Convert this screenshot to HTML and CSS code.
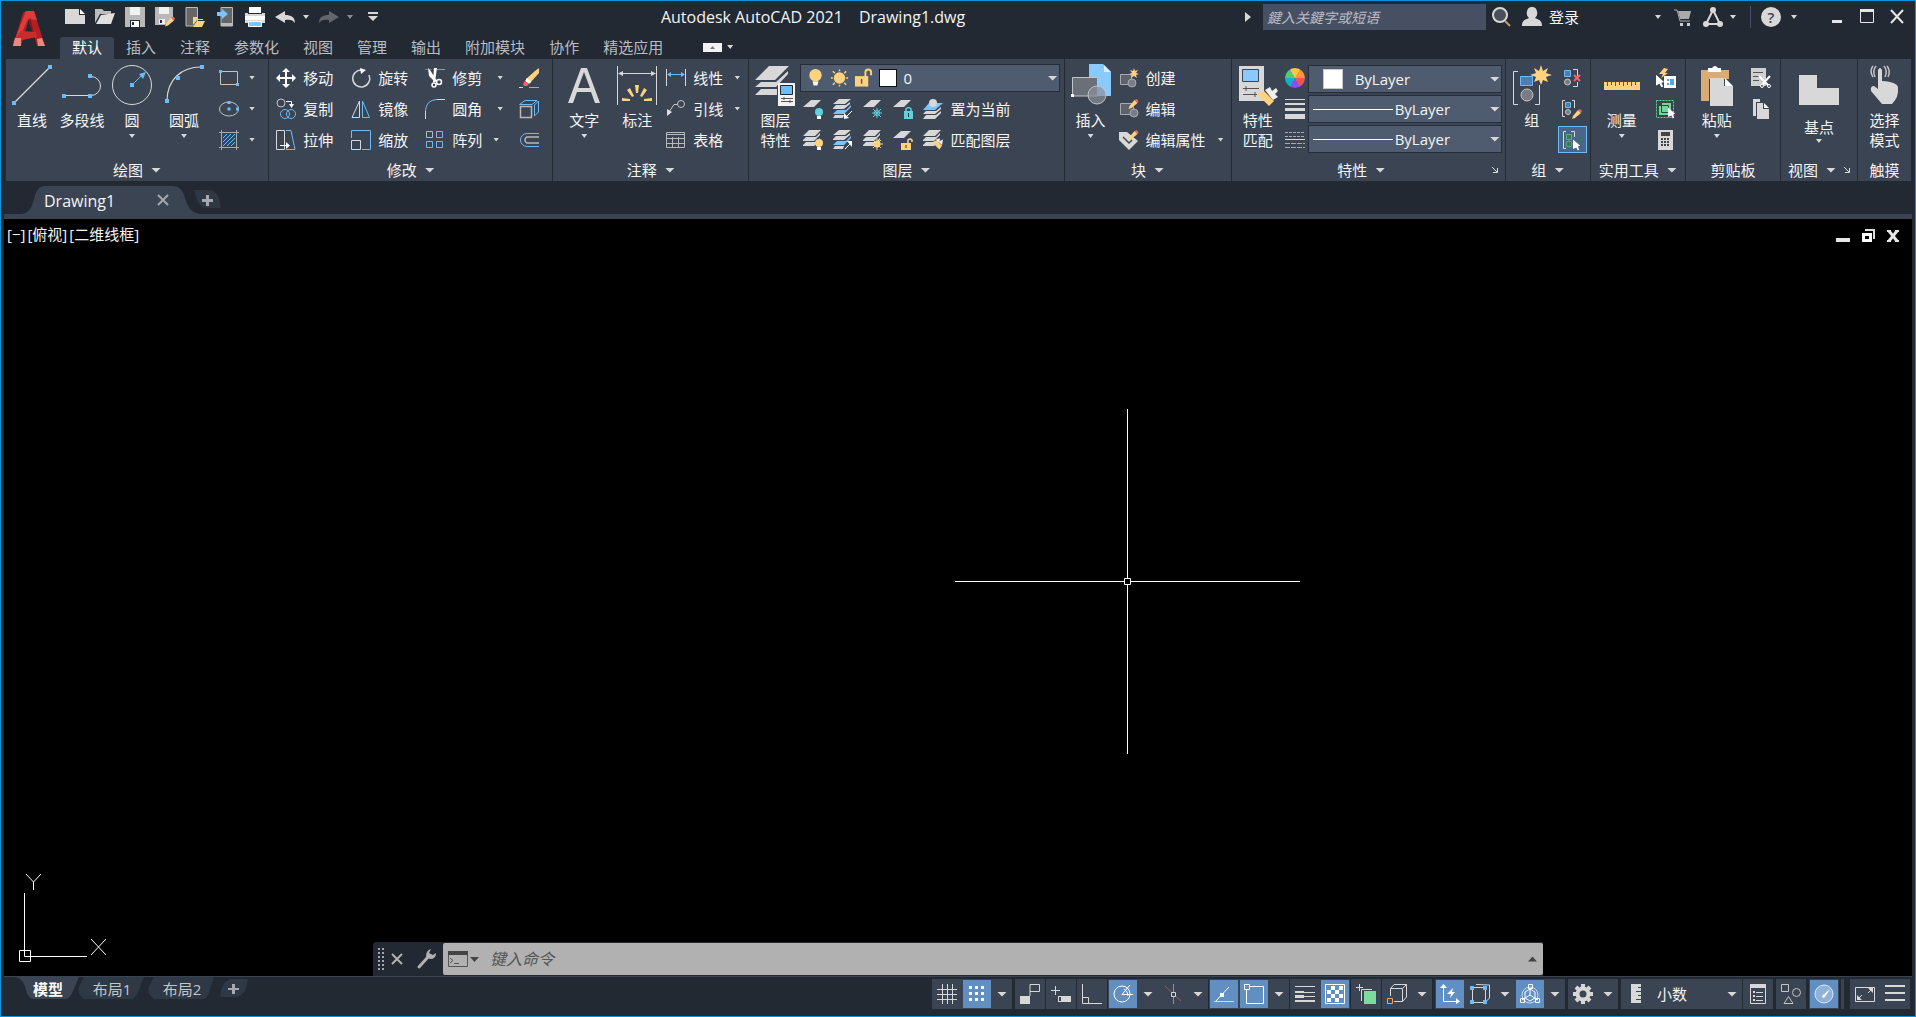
FILE: index.html
```html
<!DOCTYPE html>
<html lang="zh-CN">
<head>
<meta charset="utf-8">
<title>Autodesk AutoCAD 2021 - Drawing1.dwg</title>
<link rel="stylesheet" href="styles.css">
</head>
<body>
<svg class="defs" aria-hidden="true">
  <symbol id="leaf" viewBox="0 0 20 20"><path fill="#d8d8d8" d="M8 1H18L11 8H0z"/></symbol>
  <symbol id="stack" viewBox="0 0 20 20"><path fill="#d8d8d8" d="M6 0H18L12 6H0zM0 10L3 7H13L17 3V5L11 11H0zM0 15L3 12H13L17 8V10L11 16H0z"/></symbol>
  <symbol id="stackblue" viewBox="0 0 20 20"><path fill="#d8d8d8" d="M6 0H18L12 5H0zM0 9L3 6H13L17 3V5L11 10H0z"/><path fill="#7cc4fb" d="M0 15L4 11H13L18 6V8L11 15z"/><path fill="#d8d8d8" d="M0 19L2 16H11L10 19z"/></symbol>
  <symbol id="pencil" viewBox="0 0 10 10"><path fill="#ffd27f" d="M1 7L6 1 9 4 3 9 0 10z"/><path fill="#f4636a" d="M6 1L8 0 10 2 9 4z"/></symbol>
  <symbol id="brush" viewBox="0 0 12 12"><path fill="#ffd27f" d="M0 4L5 2 11 8 8 12z"/><path fill="#f0f0f0" d="M4 1L8 0 8 3 12 1 11 7z"/></symbol>
  <symbol id="cursor" viewBox="0 0 10 14"><path fill="#fff" d="M0 0L9 8 6 9 8 13 6 14 4 10 0 12z"/></symbol>
</svg>
<div class="window">
  <header class="top">
    <button class="logo" aria-label="应用程序菜单"><svg width="32" height="36" viewBox="0 0 32 36"><path fill="#b51f24" d="M10 2L13 0H21L32 35H24L16 8 8 35H0z"/><path fill="#e03a3c" d="M13 0H21L24 9 15 8 6 28 0 33z"/><path fill="#8d1519" d="M17 6L24 35 21 24 16 12z"/><path fill="#c92b2f" d="M8 20L23 21 24 26 0 31z"/><path fill="#e98a82" d="M2 27L8 27 8 35H0zM24 28L29 27 32 35H25z"/></svg></button>
    <div class="topmain">
      <div class="titlebar">
        <div class="qat">
          <button class="ic" aria-label="新建"><svg viewBox="0 0 20 20"><path fill="#d8d8d8" d="M0 2H14V8H20V17H0z"/><path fill="#fff" d="M15 2L20 7H15z"/></svg></button>
          <button class="ic" aria-label="打开"><svg viewBox="0 0 20 20"><path fill="#bcbcbc" d="M0 2H7L9 4H16V7H5L0 16z"/><path fill="#e0e0e0" d="M6 8L20 6 16 17H1z"/></svg></button>
          <button class="ic" aria-label="保存"><svg viewBox="0 0 20 20"><path fill="#b8b8b8" d="M0 0H20V20H0z"/><path fill="#f2f2f2" d="M5 0H15V8H5z"/><path fill="#232a34" d="M5 13H15V20H5z"/><path fill="#fff" d="M6 14H14V20H6z"/><path fill="#232a34" d="M7 15H9V18H7z"/></svg></button>
          <button class="ic" aria-label="另存为"><svg viewBox="0 0 20 20"><path fill="#b8b8b8" d="M0 0H18V10L10 18H0z"/><path fill="#f2f2f2" d="M4 0H14V7H4zM4 12H10V17H4z"/><path fill="#232a34" d="M5 13H7V16H5z"/><use href="#pencil" x="10" y="9" width="10" height="11"/></svg></button>
          <button class="ic" aria-label="从移动设备打开"><svg viewBox="0 0 20 20"><path fill="#666" stroke="#bbb" d="M1 .5H12.500V19H1z"/><path fill="#ffd27f" d="M8 10H12L13 12H18V13H12L8 18zM12 14H20L17 20H8z"/></svg></button>
          <button class="ic" aria-label="保存到移动设备"><svg viewBox="0 0 20 20"><path fill="#666" stroke="#bbb" d="M6 .5H17.500V19H6z"/><path fill="#bbb" d="M6 16H17V19H6z"/><path fill="#7cc4fb" d="M2 5H7V2L13 7 7 12V9H2z"/></svg></button>
          <button class="ic" aria-label="打印"><svg viewBox="0 0 20 20"><path fill="#d8d8d8" d="M4 0H16V6H20V16H0V6H4z"/><path fill="#fff" d="M4 0H16V6H4zM0 9H20V13H0z"/><path fill="#232a34" d="M3 6H17V7H3z"/><path fill="#7cc4fb" stroke="#fff" d="M3.500 14.500H16.500V19.500H3.500z"/></svg></button>
          <button class="ic" aria-label="放弃"><svg viewBox="0 0 20 20"><path fill="#d8d8d8" d="M0 10L10 4V8C16 8 20 10 20 16 18 13 15 12 10 13V16z"/></svg></button>
          <button class="mini" aria-label="放弃列表"><i class="caret"></i></button>
          <button class="ic" aria-label="重做"><svg viewBox="0 0 20 20"><path fill="#63676d" d="M20 10L10 4V8C4 8 0 10 0 16 2 13 5 12 10 13V16z"/></svg></button>
          <button class="mini dim" aria-label="重做列表"><i class="caret"></i></button>
          <button class="ic" aria-label="自定义快速访问工具栏"><svg viewBox="0 0 20 20"><path fill="#d8d8d8" d="M5 5H15V7H5zM5 9H15L10 14z"/></svg></button>
        </div>
        <h1 class="title"><span>Autodesk AutoCAD 2021</span><span>Drawing1.dwg</span></h1>
        <div class="info">
          <button class="mini" aria-label="收拢"><svg width="6" height="10" viewBox="0 0 6 10"><path fill="#d8d8d8" d="M0 0L6 5 0 10z"/></svg></button>
          <input class="search" type="text" aria-label="搜索" placeholder="鍵入关鍵字或短语">
          <button class="ic" aria-label="搜索"><svg viewBox="0 0 20 20"><circle cx="8" cy="8" r="7" fill="#4a505a" stroke="#d8d8d8" stroke-width="2"/><path stroke="#c99a63" stroke-width="2" d="M13 14L18 19"/></svg></button>
          <button class="login"><svg width="20" height="20" viewBox="0 0 20 20"><path fill="#d8d8d8" d="M10 0A5 6 0 0 1 13 11C18 13 20 14 20 19H0C0 14 2 13 7 11A5 6 0 0 1 10 0"/></svg><span>登录</span><i class="caret"></i></button>
          <button class="ic" aria-label="应用商店"><svg viewBox="0 0 20 20"><path fill="none" stroke="#aaa" d="M1 3H4L7 14H17"/><path fill="#aaa" d="M5 4H18L16 12H7z"/><path fill="#ccc" d="M7 16H10V19H7zM14 16H17V19H14z"/></svg></button>
          <button class="app" aria-label="Autodesk"><svg width="20" height="20" viewBox="0 0 20 20"><path fill="none" stroke="#d8d8d8" stroke-width="2" d="M10 3L17 17H3z"/><circle cx="10" cy="3" r="3" fill="#d8d8d8"/><circle cx="3" cy="17" r="3" fill="#d8d8d8"/><circle cx="17" cy="17" r="3" fill="#d8d8d8"/></svg><i class="caret"></i></button>
          <span class="sep"></span>
          <button class="ic help" aria-label="帮助">?</button>
          <i class="caret"></i>
          <div class="wins">
            <button class="ic" aria-label="最小化"><svg viewBox="0 0 20 20"><path fill="#e6e6e6" d="M5 13H15V16H5z"/></svg></button>
            <button class="ic" aria-label="最大化"><svg viewBox="0 0 20 20"><path fill="none" stroke="#e6e6e6" d="M3 3.500H17M3.500 3V15.500H16.500V3"/><path fill="#e6e6e6" d="M3 2H17V5H3z"/></svg></button>
            <button class="ic" aria-label="关闭"><svg viewBox="0 0 20 20"><path stroke="#e6e6e6" stroke-width="2" d="M4 3L16 16M16 3L4 16"/></svg></button>
          </div>
        </div>
      </div>
      <nav class="tabs">
        <button class="on">默认</button><button>插入</button><button>注释</button><button>参数化</button><button>视图</button><button>管理</button><button>输出</button><button>附加模块</button><button>协作</button><button>精选应用</button>
        <button class="fold" aria-label="最小化功能区"><svg width="19" height="9" viewBox="0 0 19 9"><path fill="#f2f2f2" d="M0 0H19V9H0z"/><path fill="#777" d="M7 6H12L9.500 3z"/></svg><i class="caret"></i></button>
      </nav>
    </div>
  </header>

  <main class="ribbon">
    <section class="panel">
      <div class="body">
        <button class="big w48"><svg viewBox="0 0 40 40"><path stroke="#d8d8d8" stroke-width="1.200" d="M1 39L39 1"/><path fill="#6cbcf7" d="M0 36H4V40H0zM36 0H40V4H36z"/></svg>直线</button>
        <button class="big w52"><svg viewBox="0 0 40 40"><path fill="none" stroke="#d8d8d8" d="M4 30.500H26M29 11.500A9.500 9.500 0 0 1 29 30.500"/><path fill="#6cbcf7" d="M0 29H4V33H0zM26 29H30V33H26zM26 9H30V13H26z"/></svg>多段线</button>
        <button class="big w48"><svg viewBox="0 0 40 40"><circle cx="20" cy="20" r="19.500" fill="none" stroke="#d8d8d8"/><path stroke="#6cbcf7" d="M22 18L30 10"/><path fill="#6cbcf7" d="M18 18H22V22H18zM34 7L31 14 27 9z"/></svg>圆<i class="caret"></i></button>
        <button class="big w56"><svg viewBox="0 0 40 40"><path fill="none" stroke="#d8d8d8" stroke-width="1.200" d="M3 36C3 14 18 2 37 2"/><path fill="#6cbcf7" d="M1 34H5V38H1zM36 0H40V4H36zM12 11H16V15H12z"/></svg>圆弧<i class="caret"></i></button>
        <div class="rows">
          <div class="row"><button class="tool" aria-label="矩形"><svg viewBox="0 0 20 20"><path fill="none" stroke="#c4c4c4" d="M1.500 3.500H18.500V16.500H1.500z"/><path fill="#6cbcf7" d="M0 2H3V5H0zM17 15H20V18H17z"/></svg></button><i class="caret"></i></div>
          <div class="row"><button class="tool" aria-label="椭圆"><svg viewBox="0 0 20 20"><ellipse cx="10" cy="10" rx="9.500" ry="7" fill="none" stroke="#c4c4c4"/><path fill="#6cbcf7" d="M8.500 8.500H11.500V11.500H8.500zM17 8.500H20V11.500H17zM8.500 2H11.500V5H8.500z"/></svg></button><i class="caret"></i></div>
          <div class="row"><button class="tool" aria-label="图案填充"><svg viewBox="0 0 20 20"><path stroke="#aaa" d="M0 2.500H20M0 17.500H20M2.500 0V20M17.500 0V20"/><path stroke="#6cbcf7" d="M4 8L8 4M4 12L12 4M4 16L16 4M8 16L16 8M12 16L16 12"/></svg></button><i class="caret"></i></div>
        </div>
      </div>
      <h2>绘图<i class="caret lg"></i></h2>
    </section>

    <section class="panel modify">
      <div class="body">
        <div class="rows">
          <button class="tool"><svg viewBox="0 0 20 20"><path fill="#fff" d="M10 0L14 4H11V9H16V6L20 10 16 14V11H11V16H14L10 20 6 16H9V11H4V14L0 10 4 6V9H9V4H6z"/></svg>移动</button>
          <button class="tool"><svg viewBox="0 0 20 20"><circle cx="5" cy="4" r="4" fill="none" stroke="#c4c4c4"/><circle cx="9" cy="15" r="4.500" fill="none" stroke="#6cbcf7"/><circle cx="15" cy="15" r="4.500" fill="none" stroke="#6cbcf7"/><path fill="none" stroke="#fff" d="M10 2.500H15.500V6"/><path fill="#fff" d="M13 5H18L15.500 9z"/></svg>复制</button>
          <button class="tool"><svg viewBox="0 0 20 20"><path fill="none" stroke="#d8d8d8" d="M.5 .5H8.500V19.500H.5z"/><path fill="none" stroke="#6cbcf7" d="M10 .5H15L19 19.500H10"/><path stroke="#fff" d="M4 15.500H12"/><path fill="#fff" d="M10 12L14 15.500 10 19z"/></svg>拉伸</button>
        </div>
        <div class="rows">
          <button class="tool"><svg viewBox="0 0 20 20"><path fill="none" stroke="#d8d8d8" stroke-width="1.500" d="M11 2A8.500 8.500 0 1 0 18 7"/><path fill="#fff" d="M9 0L15 2 10 6z"/></svg>旋转</button>
          <button class="tool"><svg viewBox="0 0 20 20"><path fill="none" stroke="#d8d8d8" d="M8.500 2V18.500H1z"/><path fill="none" stroke="#6cbcf7" d="M11.500 2V18.500H18.500z"/></svg>镜像</button>
          <button class="tool"><svg viewBox="0 0 20 20"><path fill="none" stroke="#6cbcf7" d="M.5 8V.5H19.500V19.500H11"/><path fill="none" stroke="#d8d8d8" d="M.5 10.500H9.500V19.500H.5z"/></svg>缩放</button>
        </div>
        <div class="rows wide">
          <div class="row"><button class="tool"><svg viewBox="0 0 20 20"><path stroke="#4e7ea6" stroke-dasharray="3 1" d="M0 1.500H9"/><path stroke="#999" d="M12 1.500H20"/><path fill="#fff" d="M3 0L5 2 12 13 10 14 4 8zM9 0H12L10 14 8 14z"/><circle cx="9" cy="17" r="2" fill="none" stroke="#fff" stroke-width="1.500"/><circle cx="14" cy="14" r="2.500" fill="none" stroke="#fff" stroke-width="1.500"/></svg>修剪</button><i class="caret"></i></div>
          <div class="row"><button class="tool"><svg viewBox="0 0 20 20"><path fill="none" stroke="#6cbcf7" d="M.5 12Q1 1 12 .5"/><path stroke="#d8d8d8" d="M12 .5H20M.5 12V20"/></svg>圆角</button><i class="caret"></i></div>
          <div class="row near"><button class="tool"><svg viewBox="0 0 20 20"><path fill="none" stroke="#b9b9b9" d="M1.500 1.500H7.500V7.500H1.500z"/><path fill="none" stroke="#6cbcf7" d="M11.500 1.500H17.500V7.500H11.500zM1.500 11.500H7.500V17.500H1.500zM11.500 11.500H17.500V17.500H11.500z"/></svg>阵列</button><i class="caret"></i></div>
        </div>
        <div class="rows">
          <button class="tool" aria-label="删除"><svg viewBox="0 0 20 20"><path stroke="#d8d8d8" d="M0 19.500H4"/><path stroke="#6cbcf7" d="M10 19.500H20"/><path fill="#ffd27f" d="M20 0V5L11 15 7 11 16 3z"/><path fill="#fff" d="M8 10L12 14 10 16 6 13z"/><path fill="#f4636a" d="M6 13L10 16 8 18H5L4 16z"/></svg></button>
          <button class="tool" aria-label="分解"><svg viewBox="0 0 20 20"><path fill="none" stroke="#b9b9b9" stroke-width="1.500" d="M1.500 7.500H12.500V18.500H1.500z"/><path fill="none" stroke="#6cbcf7" d="M.5 5.500L6 1.500H18L13 5.500zM15.500 17V6L19.500 2V13z"/></svg></button>
          <button class="tool" aria-label="偏移"><svg viewBox="0 0 20 20"><path fill="none" stroke="#6cbcf7" d="M20 3.500H8A6.500 6.500 0 0 0 8 16.500H20"/><path fill="none" stroke="#b9b9b9" stroke-width="1.500" d="M20 7H8A3.200 3.200 0 0 0 8 13H20"/></svg></button>
        </div>
      </div>
      <h2>修改<i class="caret lg"></i></h2>
    </section>

    <section class="panel annot">
      <div class="body">
        <button class="big w48"><svg viewBox="0 0 40 40"><path fill="#d8d8d8" fill-rule="evenodd" d="M17 3H23L36 38H31L27 27H13L9 38H4zM20 7L14 23H26z"/></svg>文字<i class="caret"></i></button>
        <button class="big w52"><svg viewBox="0 0 40 40"><path stroke="#d8d8d8" d="M.5 1V40M39.500 1V40M3 8.500H37"/><path fill="#d8d8d8" d="M1 8.500L6 6V11zM39 8.500L34 6V11z"/><path fill="#ffd27f" d="M18 20H22L21 28H19zM10 25L13 23 17 31 15 32zM30 25L27 23 23 31 25 32zM5 33L13 34V36H5zM35 33L27 34V36H35z"/></svg>标注</button>
        <div class="rows wide">
          <div class="row"><button class="tool"><svg viewBox="0 0 20 20"><path stroke="#d8d8d8" d="M.5 1V18M19.500 1V18"/><path stroke="#6cbcf7" d="M3 6.500H17"/><path fill="#6cbcf7" d="M1 6.500L5 4V9zM19 6.500L15 4V9z"/></svg>线性</button><i class="caret"></i></div>
          <div class="row"><button class="tool"><svg viewBox="0 0 20 20"><circle cx="15" cy="5" r="3.500" fill="none" stroke="#c4c4c4"/><path fill="none" stroke="#c4c4c4" d="M11 5.500H8L3 13"/><path fill="#e0e0e0" d="M1 10L6 13 1 17z"/></svg>引线</button><i class="caret"></i></div>
          <div class="row"><button class="tool"><svg viewBox="0 0 20 20"><path fill="none" stroke="#b9b9b9" d="M.5 2.500H18.500V17.500H.5zM0 4.500H19M0 8.500H19M0 13.500H19M6.500 7V18M12.500 7V18"/></svg>表格</button></div>
        </div>
      </div>
      <h2>注释<i class="caret lg"></i></h2>
    </section>

    <section class="panel layer">
      <div class="body">
        <button class="big w48"><svg viewBox="0 0 40 40"><path fill="#d8d8d8" d="M14 1H34L20 15H0zM0 22L6 17H21L33 6V9L21 22zM0 30L6 24H22V30z"/><path fill="#f2f2f2" d="M23 18H40V41H23z"/><path fill="#6cbcf7" stroke="#222933" d="M25.500 20.500H37.500V29.500H25.500z"/><path stroke="#555" d="M26 33.500H38M26 36.500H38M29 32V35M35 35V38"/></svg>图层<br>特性</button>
        <div class="fill">
          <label class="combo"><svg class="s20" viewBox="0 0 20 20"><circle cx="10" cy="7" r="6.500" fill="#ffd27f"/><path fill="#ffd27f" d="M7 11H13V14H7z"/><path fill="#fff" d="M7 14H13L12 18H8z"/></svg><svg class="s20" viewBox="0 0 20 20"><circle cx="10" cy="10" r="6" fill="#ffd27f"/><path stroke="#ffd27f" stroke-width="1.500" d="M10 1V3M10 17V19M1 10H3M17 10H19M3 3L5 5M15 15L17 17M3 17L5 15M15 5L17 3"/></svg><svg class="s20" viewBox="0 0 20 20"><path fill="#ffd27f" d="M1 8H15V19H1z"/><path fill="none" stroke="#ffd27f" stroke-width="2" d="M12 9V4Q12 1 15 1T18 4V7"/><path stroke="#555" stroke-width="1.500" d="M8 11V16"/></svg><span class="swatch dark"></span><select aria-label="图层"><option>0</option></select><i class="caret lg"></i></label>
          <div class="strips">
          <div class="strip">
            <button class="tool" aria-label="关"><svg viewBox="0 0 20 20"><use href="#leaf"/><circle cx="16" cy="13" r="4" fill="#5fd2dd"/><path fill="#fff" d="M14 17H18V20H14z"/></svg></button>
            <button class="tool" aria-label="隔离"><svg viewBox="0 0 20 20"><use href="#stackblue"/><path stroke="#fff" d="M19 12L12 19"/><path fill="#fff" d="M11 14L16 19 11 20z"/></svg></button>
            <button class="tool" aria-label="冻结"><svg viewBox="0 0 20 20"><use href="#leaf"/><path stroke="#5fd2dd" d="M14 9V19M9 14H19M10 10L18 18M18 10L10 18"/><circle cx="14" cy="14" r="2.500" fill="none" stroke="#5fd2dd"/></svg></button>
            <button class="tool" aria-label="锁定"><svg viewBox="0 0 20 20"><use href="#leaf"/><path fill="#5fd2dd" d="M11 12H20V20H11z"/><path fill="none" stroke="#5fd2dd" stroke-width="1.500" d="M13 12V10Q15.500 7 18 10V12"/><path stroke="#333" d="M15.500 14V18"/></svg></button>
            <button class="tool"><svg viewBox="0 0 20 20"><path fill="#7cc4fb" d="M6 4H20L12 11H0z"/><circle cx="10" cy="4" r="4" fill="#d8d8d8"/><path fill="#d8d8d8" d="M0 15L3 12H13L18 8V10L12 15zM0 20L3 16H13L18 12V14L12 20z"/></svg>置为当前</button>
          </div>
          <div class="strip">
            <button class="tool" aria-label="打开所有图层"><svg viewBox="0 0 20 20"><use href="#stack"/><circle cx="16" cy="13" r="4" fill="#ffd27f"/><path fill="#fff" d="M14 17H18V20H14z"/></svg></button>
            <button class="tool" aria-label="取消隔离"><svg viewBox="0 0 20 20"><use href="#stackblue"/><path stroke="#fff" d="M12 19L18 13"/><path fill="#fff" d="M14 11L19 11V17z"/></svg></button>
            <button class="tool" aria-label="解冻所有图层"><svg viewBox="0 0 20 20"><use href="#stack"/><circle cx="14" cy="14" r="3.500" fill="#ffd27f"/><path stroke="#ffd27f" d="M14 8V20M8 14H20M10 10L18 18M18 10L10 18"/></svg></button>
            <button class="tool" aria-label="解锁"><svg viewBox="0 0 20 20"><use href="#leaf"/><path fill="#ffd27f" d="M8 13H18V20H8z"/><path fill="none" stroke="#ffd27f" stroke-width="1.500" d="M15 13V10Q17 8 19 10V12"/><path stroke="#333" d="M13 15V18"/></svg></button>
            <button class="tool"><svg viewBox="0 0 20 20"><use href="#stack"/><use href="#brush" x="9" y="8" width="11" height="12"/></svg>匹配图层</button>
          </div>
          </div>
        </div>
      </div>
      <h2>图层<i class="caret lg"></i></h2>
    </section>

    <section class="panel block">
      <div class="body">
        <button class="big w48"><svg viewBox="0 0 40 40"><path fill="#89c9fb" d="M18 -1H32L40 7V31H18z"/><path fill="#d6ebfb" d="M33 0L40 7H33z"/><path fill="#6a6f7a" stroke="#c4c4c4" d="M1.500 12.500H26.500V31H1.500z"/><circle cx="26" cy="30" r="9" fill="#8b909a" fill-opacity=".7" stroke="#c4c4c4"/><path fill="#fff" d="M0 29H3V32H0z"/></svg>插入<i class="caret"></i></button>
        <div class="rows wide">
          <button class="tool"><svg viewBox="0 0 20 20"><path fill="#5c626e" stroke="#aaa" d="M1.500 6.500H12.500V16.500H1.500z"/><circle cx="13" cy="15" r="4" fill="#777c86" stroke="#aaa"/><path fill="#ffd27f" d="M15 0L16 3 19 2 17 5 20 6 17 7 18 10 15 8 12 10 13 7 10 6 13 5 11 2 14 3z"/></svg>创建</button>
          <button class="tool"><svg viewBox="0 0 20 20"><path fill="#5c626e" stroke="#aaa" d="M1.500 4.500H14.500V15.500H1.500z"/><circle cx="15" cy="14" r="4" fill="#777c86" stroke="#aaa"/><use href="#pencil" x="9" y="0" width="11" height="10"/></svg>编辑</button>
          <div class="row"><button class="tool"><svg viewBox="0 0 20 20"><path fill="#d8d8d8" d="M0 2H8L19 11 10 20 0 10z"/><path fill="none" stroke="#444" stroke-width="1.500" d="M4 7L10 13 13 10"/><use href="#pencil" x="9" y="0" width="11" height="10"/></svg>编辑属性</button><i class="caret"></i></div>
        </div>
      </div>
      <h2>块<i class="caret lg"></i></h2>
    </section>

    <section class="panel props">
      <div class="body">
        <button class="big w48"><svg viewBox="0 0 40 40"><path fill="#d8d8d8" d="M1 1H26V36H1z"/><path fill="#89c9fb" stroke="#3b4453" d="M4.500 4.500H20.500V16.500H4.500z"/><path stroke="#555" d="M5 23.500H21M5 29.500H19M8 21V26M17 27V32"/><path fill="#f0f0f0" d="M27 25L32 22 34 26 38 23 40 26 37 29 40 32 35 35z"/><path fill="#ffd27f" d="M19 29L26 26 36 36 31 41z"/></svg>特性<br>匹配</button>
        <div class="rows narrow">
          <button class="tool" aria-label="对象颜色"><span class="wheel"></span></button>
          <button class="tool" aria-label="线宽"><svg viewBox="0 0 20 20"><path fill="#d8d8d8" d="M0 0H20V1H0zM0 4H20V6H0zM0 9H20V12H0zM0 15H20V20H0z"/></svg></button>
          <button class="tool" aria-label="线型"><svg viewBox="0 0 20 20"><path stroke="#aaa" stroke-dasharray="3 1" d="M0 2.500H20M0 6.500H20"/><path stroke="#d8d8d8" d="M0 9.500H20"/><path stroke="#aaa" stroke-dasharray="5 1" d="M0 13.500H20M0 17.500H20"/></svg></button>
        </div>
        <div class="combos">
          <label class="combo c1"><span class="swatch"></span><select aria-label="颜色"><option>ByLayer</option></select><i class="caret lg"></i></label>
          <label class="combo c2"><span class="rule"></span><select aria-label="线宽"><option>ByLayer</option></select><i class="caret lg"></i></label>
          <label class="combo c2"><span class="rule"></span><select aria-label="线型"><option>ByLayer</option></select><i class="caret lg"></i></label>
        </div>
      </div>
      <h2><span>特性<i class="caret lg"></i></span><button class="launch" aria-label="特性面板"><svg width="6" height="6" viewBox="0 0 6 6"><path fill="none" stroke="#d8d8d8" d="M0 0L5 5M5.500 1V5.500H1"/></svg></button></h2>
    </section>

    <section class="panel group">
      <div class="body">
        <button class="big w52"><svg viewBox="0 0 40 40"><path fill="none" stroke="#d8d8d8" d="M6 6.500H1.500V39.500H6M23 39.500H27.500V20"/><path fill="#4d7fab" stroke="#6cbcf7" d="M8.500 11.500H20.500V20.500H8.500z"/><circle cx="15" cy="30" r="6" fill="#777c86" stroke="#c4c4c4"/><path fill="#ffd27f" d="M29 0L31 6 36 3 34 8 40 10 34 12 36 17 31 15 29 20 27 15 22 17 24 12 18 10 24 8 22 3 27 6z"/></svg>组</button>
        <div class="rows">
          <button class="tool" aria-label="解除编组"><svg viewBox="0 0 20 20"><path fill="none" stroke="#d8d8d8" d="M11 1.500H15.500V8M15.500 14V18.500H11"/><path fill="#4d7fab" stroke="#6cbcf7" d="M2.500 2.500H8.500V8.500H2.500z"/><circle cx="5.500" cy="14" r="3" fill="#777c86" stroke="#c4c4c4"/><path stroke="#f4636a" stroke-width="2" d="M12 7L18 13M18 7L12 13"/></svg></button>
          <button class="tool" aria-label="组编辑"><svg viewBox="0 0 20 20"><path fill="none" stroke="#d8d8d8" d="M3 1.500H.5V17.500H3M10 1.500H12.500V9"/><path fill="#4d7fab" stroke="#6cbcf7" d="M3.500 3.500H8.500V8.500H3.500z"/><circle cx="6" cy="13" r="2.500" fill="#777c86" stroke="#c4c4c4"/><use href="#pencil" x="10" y="10" width="10" height="10"/></svg></button>
          <button class="tool sel" aria-label="启用组选择"><svg viewBox="0 0 20 20"><path fill="none" stroke="#d8d8d8" d="M4 1.500H1.500V18.500H4M9 1.500H12.500V7"/><path fill="#3c7757" stroke="#4fb870" d="M4.500 4.500H9.500V9.500H4.500z"/><circle cx="7" cy="14" r="3" fill="#3c7757" stroke="#4fb870"/><use href="#cursor" x="11" y="9" width="8" height="12"/></svg></button>
        </div>
      </div>
      <h2>组<i class="caret lg"></i></h2>
    </section>

    <section class="panel util">
      <div class="body">
        <button class="big w52"><svg viewBox="0 0 40 40"><path fill="#ffd27f" d="M2 17H38V25H2z"/><path stroke="#6a5a38" d="M5.500 17V21M9.500 17V20M13.500 17V21M17.500 17V20M21.500 17V21M25.500 17V20M29.500 17V21M33.500 17V20"/></svg>测量<i class="caret"></i></button>
        <div class="rows">
          <button class="tool" aria-label="快速选择"><svg viewBox="0 0 20 20"><path fill="#ffd27f" d="M8 0L12 1 9 5 12 5 5 10 7 6H3z"/><path fill="#fff" d="M8 8H20V20H8z"/><path stroke="#1c8ae0" stroke-width="1.500" d="M11 12H13M11 16H13M14 12H18M14 14H18M14 16H18"/><use href="#cursor" x="0" y="6" width="9" height="14"/></svg></button>
          <button class="tool" aria-label="全部选择"><svg viewBox="0 0 20 20"><path fill="none" stroke="#63d08c" stroke-dasharray="2 1" d="M.5 1.500H17.500V18.500H.5z"/><path fill="#74d79a" stroke="#2a4a3c" d="M2.500 6.500H12.500V16.500H2.500zM5.500 3.500H15.500V13.500H5.500z"/><use href="#cursor" x="12" y="8" width="8" height="12"/></svg></button>
          <button class="tool" aria-label="快速计算器"><svg viewBox="0 0 20 20"><path fill="#d8d8d8" d="M2 0H17V20H2z"/><path fill="#444" d="M5 2H14V6H5z"/><path stroke="#444" stroke-width="2" stroke-dasharray="2 1" d="M5 9H14M5 12H14M5 15H14"/></svg></button>
        </div>
      </div>
      <h2>实用工具<i class="caret lg"></i></h2>
    </section>

    <section class="panel clip">
      <div class="body">
        <button class="big w60"><svg viewBox="0 0 40 40"><path fill="#d9ac76" d="M4 5H32V14H12V36H4z"/><path fill="#fff" d="M11 3H15Q18-1 21 3H24V7H11z"/><path fill="#d8d8d8" d="M13 13H27V21H36V41H13z"/><path fill="#fff" d="M28 13L36 21H28z"/></svg>粘贴<i class="caret"></i></button>
        <div class="rows">
          <button class="tool" aria-label="剪切"><svg viewBox="0 0 20 20"><path fill="#d0d0d0" d="M0 0H15V18H0z"/><path stroke="#555" d="M2 4.500H12M2 8.500H9M2 12.500H8"/><path stroke="#fff" stroke-width="2" d="M8 8L18 18M19 8L10 18"/><circle cx="11" cy="18" r="1.500" fill="#3b4453" stroke="#fff"/><circle cx="18" cy="18" r="1.500" fill="#3b4453" stroke="#fff"/></svg></button>
          <button class="tool" aria-label="复制"><svg viewBox="0 0 20 20"><path fill="#d8d8d8" d="M2 0H9V3H5V17H2zM6 4H12V10H18V20H6z"/><path fill="#fff" d="M13 4L18 9H13z"/></svg></button>
        </div>
      </div>
      <h2>剪贴板</h2>
    </section>

    <section class="panel view">
      <div class="body">
        <button class="big full low"><svg viewBox="0 0 40 40"><path fill="#d8d8d8" d="M0 8H18V21H40V38H0z"/></svg>基点<i class="caret"></i></button>
      </div>
      <h2><span>视图<i class="caret lg"></i></span><button class="launch" aria-label="视图面板"><svg width="6" height="6" viewBox="0 0 6 6"><path fill="none" stroke="#d8d8d8" d="M0 0L5 5M5.500 1V5.500H1"/></svg></button></h2>
    </section>

    <section class="panel">
      <div class="body">
        <button class="big full"><svg viewBox="0 0 40 40"><path fill="#d8d8d8" d="M14 5Q16 1 18 5V16Q34 17 34 23 35 32 28 39H18L7 26Q6 21 10 21L14 24z"/><path fill="none" stroke="#c4c4c4" stroke-width="1.500" d="M11 12Q8 6 12 1M21 12Q24 6 20 1M9 12Q5 6 9 1M24 12Q27 6 23 1"/></svg>选择<br>模式</button>
      </div>
      <h2>触摸</h2>
    </section>
  </main>

  <nav class="files">
    <button class="file"><svg width="178" height="28" viewBox="0 0 178 28"><path fill="#3b4453" d="M0 28C9 27 11 17 13 9 Q16 0 23 0H150Q159 0 162 9 C165 19 168 27 178 28z"/></svg><span>Drawing1</span></button>
    <button class="fclose" aria-label="关闭图形"><svg width="12" height="12" viewBox="0 0 12 12"><path stroke="#a5a9af" stroke-width="2" d="M1 1L11 11M11 1L1 11"/></svg></button>
    <button class="fplus" aria-label="新图形"><svg width="28" height="20" viewBox="0 0 28 20"><path fill="#2f3742" d="M0 0H17Q25 2 27 18H12Q4 18 0 0z"/><path fill="#a5a9af" d="M12 5H15V9H19V12H15V16H12V12H8V9H12z"/></svg></button>
  </nav>

  <section class="canvas">
    <div class="vp"><button>[−]</button><button>[俯视]</button><button>[二维线框]</button></div>
    <div class="vpwin">
      <button aria-label="最小化视口"><svg width="14" height="14" viewBox="0 0 14 14"><path fill="#e6e6e6" d="M0 9H14V13H0z"/></svg></button>
      <button aria-label="还原视口"><svg width="14" height="14" viewBox="0 0 14 14"><path fill="none" stroke="#ddd" stroke-width="2" d="M4 1H13V10"/><path fill="none" stroke="#fff" stroke-width="3" d="M2.500 5.500H9.500V11.500H2.500z"/></svg></button>
      <button aria-label="关闭视口"><svg width="14" height="14" viewBox="0 0 14 14"><path stroke="#e6e6e6" stroke-width="3" d="M3 2L11 12M11 2L3 12"/><path fill="#e6e6e6" d="M1 1H5V3H1zM9 1H13V3H9zM1 11H5V13H1zM9 11H13V13H9z"/></svg></button>
    </div>
    <svg class="cross" width="345" height="345" viewBox="0 0 345 345"><path stroke="#fff" d="M172.500 0V169M172.500 176V345M0 172.500H169M176 172.500H345"/><path fill="none" stroke="#fff" d="M169.500 169.500H175.500V175.500H169.500z"/></svg>
    <svg class="ucs" width="90" height="90" viewBox="0 0 90 90"><path fill="none" stroke="#fff" d="M5.500 19V82.500H68M.5 76.500H11.500V87.500H.5zM7 0L14.500 8 22 0M14.500 8V16M72 65L87 81M87 65L72 81"/></svg>
    <form class="cmd">
      <svg class="grip" width="8" height="24" viewBox="0 0 8 24"><path stroke="#a5a9af" stroke-width="2" stroke-dasharray="2 2" d="M2 1V23M6 1V23"/></svg>
      <button type="button" aria-label="关闭命令行"><svg width="12" height="12" viewBox="0 0 12 12"><path stroke="#b1b1b1" stroke-width="2" d="M1 1L11 11M11 1L1 11"/></svg></button>
      <button type="button" class="wrench" aria-label="自定义"><svg width="20" height="20" viewBox="0 0 20 20"><path stroke="#b1b1b1" stroke-width="3" stroke-linecap="round" d="M2 18L11 8"/><path fill="#b1b1b1" d="M14 0L12 4 16 6 19 4Q19 10 13 10L9 8Q9 1 14 0"/></svg></button>
      <div class="field">
        <button type="button" aria-label="最近使用的命令"><svg width="28" height="18" viewBox="0 0 28 18"><path fill="none" stroke="#555" d="M.5 1.500H19.500V16.500H.5z"/><path fill="#444" d="M0 1H20V5H0z"/><path fill="none" stroke="#555" d="M2 8L5 10.500 2 13M6 13.500H11"/><path fill="#444" d="M22 7H31L26.500 12z"/></svg></button>
        <input type="text" aria-label="命令" placeholder="键入命令">
        <button type="button" class="hist" aria-label="命令历史"><i class="caret up"></i></button>
      </div>
    </form>
  </section>

  <footer class="bottom">
    <nav class="layouts">
      <button class="model"><svg width="66" height="22" viewBox="0 0 66 22"><path fill="#3b4453" d="M0 0C8 1 10 5 12 13Q14 22 20 22H51Q56 22 59 14L65 0z"/></svg><span>模型</span></button>
      <button><svg width="66" height="22" viewBox="0 0 66 22"><path fill="#2f3845" d="M6 0H66L60 15Q57 22 53 22H6Q-2 16 1 10z"/></svg><span>布局1</span></button>
      <button><svg width="66" height="22" viewBox="0 0 66 22"><path fill="#2f3845" d="M6 0H66L61 15Q59 22 55 22H6Q-2 16 1 10z"/></svg><span>布局2</span></button>
      <button class="add" aria-label="新建布局"><svg width="28" height="20" viewBox="0 0 28 20"><path fill="#2f3845" d="M10 2H28Q27 16 18 20H0Q1 6 10 2z"/><path fill="#a5a9af" d="M12 7H15V11H19V13H15V17H12V13H8V11H12z"/></svg></button>
    </nav>
    <div class="status">
      <div class="sg"><button aria-label="栅格"><svg viewBox="0 0 20 20"><path stroke="#d8d8d8" d="M5.500 0V20M10.500 0V20M15.500 0V20M0 5.500H20M0 10.500H20M0 15.500H20"/></svg></button><button class="on" aria-label="捕捉"><svg viewBox="0 0 20 20"><path fill="#fff" d="M2 2H5V5H2zM8 2H11V5H8zM14 2H17V5H14zM2 8H5V11H2zM8 8H11V11H8zM14 8H17V11H14zM2 14H5V17H2zM8 14H11V17H8zM14 14H17V17H14z"/></svg></button><button class="dd" aria-label="捕捉设置"><i class="caret lg"></i></button></div>
      <div class="sg first"><button aria-label="推断约束"><svg viewBox="0 0 20 20"><path fill="none" stroke="#d8d8d8" d="M10 12V.5H19.500V7.500H10"/><path fill="#d8d8d8" d="M0 12H10V20H0z"/></svg></button></div>
      <div class="sg"><button aria-label="动态输入"><svg viewBox="0 0 20 20"><path stroke="#d8d8d8" d="M4.500 2V11M0 6.500H9"/><path fill="#d8d8d8" d="M7 12H20V18H7z"/><path fill="#444" d="M8 13H10V17H8z"/></svg></button></div>
      <div class="sg"><button aria-label="正交"><svg viewBox="0 0 20 20"><path fill="none" stroke="#d8d8d8" d="M.5 0V19.500H20M.5 13.500H6.500V19"/></svg></button></div>
      <div class="sg"><button class="on" aria-label="极轴追踪"><svg viewBox="0 0 20 20"><circle cx="9" cy="10" r="8" fill="none" stroke="#fff"/><path fill="none" stroke="#fff" d="M20 10.500H9L17 1M11 5Q15 7 15 12"/></svg></button><button class="dd" aria-label="极轴设置"><i class="caret lg"></i></button><button aria-label="等轴测草图"><svg viewBox="0 0 20 20"><path stroke="#4fb870" d="M10.500 0V20"/><path stroke="#a65560" d="M2 2L18 17"/><path fill="#3b4453" stroke="#d8d8d8" d="M8.500 8.500H12.500V12.500H8.500z"/></svg></button><button class="dd" aria-label="等轴测设置"><i class="caret lg"></i></button></div>
      <div class="sg"><button class="on" aria-label="对象捕捉追踪"><svg viewBox="0 0 20 20"><path stroke="#fff" d="M1 18L15 3"/><path stroke="#c4dbf0" d="M0 17.500H20"/><path fill="#fff" d="M6 9H10V13H6z"/></svg></button><button class="on" aria-label="对象捕捉"><svg viewBox="0 0 20 20"><path fill="none" stroke="#fff" d="M6 2.500H19.500V19.500H2.500V6M.5 .5H5.500V5.500H.5z"/></svg></button><button class="dd" aria-label="对象捕捉设置"><i class="caret lg"></i></button></div>
      <div class="sg"><button aria-label="线宽显示"><svg viewBox="0 0 20 20"><path fill="#d8d8d8" d="M0 2H20V3H0zM0 7H9V9H0zM9 8H20V9H9zM0 11H9V14H0zM9 12H20V13H9zM0 16H20V18H0z"/></svg></button><button class="on" aria-label="透明度"><svg viewBox="0 0 20 20"><path fill="none" stroke="#fff" d="M.5 .5H19.500V19.500H.5z"/><path fill="#fff" d="M6 2H10V6H6zM14 2H18V6H14zM2 6H6V10H2zM10 6H14V10H10zM6 10H10V14H6zM14 10H18V14H14zM2 14H6V18H2zM10 14H14V18H10z"/></svg></button></div>
      <div class="sg"><button aria-label="选择循环"><svg viewBox="0 0 20 20"><path stroke="#d8d8d8" d="M3.500 0V7M0 3.500H7"/><path fill="none" stroke="#d8d8d8" d="M5.500 17V5.500H16"/><path fill="#7ddc9d" d="M8 7H20V20H8z"/></svg></button></div>
      <div class="sg"><button aria-label="三维对象捕捉"><svg viewBox="0 0 20 20"><path fill="none" stroke="#d8d8d8" d="M3.500 12V4.500H15.500V17.500H7M3.500 4.500L7 .5H19.500V13L15.500 17.500M15.500 4.500L19.500 .5"/><path fill="#3b4453" stroke="#f1a36a" d="M.5 14.500H5.500V19.500H.5z"/></svg></button><button class="dd" aria-label="三维捕捉设置"><i class="caret lg"></i></button></div>
      <div class="sg first"><button class="on" aria-label="动态 UCS"><svg viewBox="0 0 20 20"><path fill="none" stroke="#fff" d="M3.500 2V17.500H18"/><path fill="#fff" d="M3.500 0L7 4H0zM20 17.500L16 14V20zM13 4L7 10H11L10 14 15 8H12z"/></svg></button><button aria-label="选择过滤"><svg viewBox="0 0 20 20"><path fill="none" stroke="#d8d8d8" d="M2.500 3V17M4 18.500H15L19.500 14V1L6 .5M4 3.500H13M15.500 6V16"/><path fill="#6cbcf7" d="M0 2H4V6H0zM13 2H17V6H13zM0 16H4V20H0zM13 16H17V20H13z"/></svg></button><button class="dd" aria-label="过滤设置"><i class="caret lg"></i></button><button class="on" aria-label="小控件"><svg viewBox="0 0 20 20"><circle cx="10" cy="11" r="8" fill="none" stroke="#c4dbf0"/><path fill="none" stroke="#fff" d="M10 4V11L2 16M10 11L18 16M8.500 .5H12.500V4.500H8.500zM.5 14.500H4.500V18.500H.5zM15.500 14.500H19.500V18.500H15.500zM5 14V8L10 5 15 8V14L10 17z"/></svg></button><button class="dd" aria-label="小控件设置"><i class="caret lg"></i></button></div>
      <div class="sg first"><button aria-label="切换工作空间"><svg viewBox="0 0 20 20"><circle cx="10" cy="10" r="5.500" fill="none" stroke="#d8d8d8" stroke-width="4"/><path stroke="#d8d8d8" stroke-width="4" d="M10 0V4M10 16V20M0 10H4M16 10H20M3 3L5 5M15 15L17 17M3 17L5 15M15 5L17 3"/></svg></button><button class="dd" aria-label="工作空间列表"><i class="caret lg"></i></button></div>
      <div class="sg first"><label class="units"><svg viewBox="0 0 20 20"><path fill="#d8d8d8" d="M5 0H15V3H12V4H15V7H10V8H15V11H12V12H15V15H10V16H15V19H5z"/></svg><select aria-label="单位"><option>小数</option></select><i class="caret lg"></i></label></div>
      <div class="sg"><button aria-label="快捷特性"><svg viewBox="0 0 20 20"><path fill="none" stroke="#d8d8d8" d="M2.500 .5H17.500V19.500H2.500z"/><path fill="#d8d8d8" d="M2 0H18V4H2zM5 7H7V9H5zM5 11H7V13H5zM5 15H7V17H5z"/><path stroke="#d8d8d8" d="M8 8.500H15M8 12.500H15M8 16.500H15"/></svg></button></div>
      <div class="sg first"><button aria-label="隔离对象"><svg viewBox="0 0 20 20"><path fill="none" stroke="#c4c4c4" d="M.5 .5H7.500V7.500H.5zM7.500 12.500L12 19.500H3z"/><circle cx="15.500" cy="8.500" r="4" fill="none" stroke="#c4c4c4"/></svg></button></div>
      <div class="sg first"><button class="on" aria-label="图形性能"><svg viewBox="0 0 20 20"><circle cx="10" cy="10" r="9" fill="#8fb3d8" stroke="#dbe8f5"/><path fill="#fff" d="M16 5L11 13 9 14 8 12z"/></svg></button></div>
      <div class="sg sliver"></div>
      <div class="sg last"><button aria-label="全屏显示"><svg viewBox="0 0 20 20"><path fill="none" stroke="#d8d8d8" d="M.5 3.500H19.500V17.500H.5z"/><path stroke="#d8d8d8" d="M3 15L7 11M13 9L17 5"/><path fill="#d8d8d8" d="M2 11V16H7zM18 9V4H13z"/></svg></button><button aria-label="自定义"><svg viewBox="0 0 20 20"><path fill="#d8d8d8" d="M0 1H20V3H0zM0 8H20V10H0zM0 15H20V17H0z"/></svg></button></div>
    </div>
  </footer>
</div>
</body>
</html>
```
FILE: styles.css
```css
* { box-sizing: border-box; }
html, body { height: 100%; margin: 0; }
body {
  background: #222933;
  color: #f4f4f4;
  font: 15px/20px "Open Sans", "Noto Sans CJK SC", sans-serif;
}
button, input, select { font: inherit; color: inherit; }
button {
  display: flex; align-items: center; justify-content: center;
  padding: 0; border: 0; background: none; white-space: nowrap;
}
h1, h2 { margin: 0; font-size: 15px; font-weight: 400; }
svg { display: block; flex: none; overflow: visible; }
.defs { position: absolute; width: 0; height: 0; }

.window {
  display: flex; flex-direction: column;
  min-height: 100vh;
  border: 1px solid #0c94d8;
}

.caret {
  flex: none; width: 6px; height: 4px;
  background: #d8d8d8;
  clip-path: polygon(0 0, 100% 0, 50% 100%);
}
.caret.lg { width: 10px; height: 5px; }
.caret.up { width: 9px; height: 5px; background: #444; clip-path: polygon(0 100%, 100% 100%, 50% 0); }
.dim .caret { background: #8a8e94; }

/* title bar */
.top { display: flex; }
.logo { width: 59px; height: 56px; align-items: flex-start; padding: 10px 3px 0 0; }
.topmain { flex: 1; min-width: 0; }
.titlebar { display: flex; height: 36px; padding: 2px 8px 6px 5px; }
.qat { display: flex; align-items: center; gap: 10px; }
.ic { width: 20px; height: 20px; }
.ic svg { width: 20px; height: 20px; }
.mini { width: 10px; height: 20px; margin: 0 -2px 0 -4px; }
.title { flex: 1; display: flex; align-items: center; justify-content: center; gap: 16px; font-size: 16px; white-space: nowrap; }
.info { display: flex; align-items: center; gap: 10px; }
.search {
  width: 223px; height: 26px; padding: 0 4px;
  border: 0; background: #474f62; font-size: 14px; font-style: italic;
}
.search::placeholder { color: #b9bdc6; opacity: 1; }
.info .mini { margin: 0; }
.info .search { margin-right: -4px; }
.login { gap: 7px; }
.login .caret { margin: 0 2px 0 69px; }
.app { gap: 7px; }
.sep { width: 1px; height: 22px; background: #4a5262; margin-left: 4px; }
.help { background: #d8d8d8; color: #3b4453; border-radius: 50%; font-weight: 600; }
.wins { display: flex; gap: 10px; margin-left: 20px; }

/* ribbon tabs */
.tabs { display: flex; height: 22px; }
.tabs button { padding: 0 12px 2px; color: #b9bdc3; }
.tabs .on { background: #3b4453; color: #fff; border-radius: 3px 3px 0 0; }
.tabs .fold { gap: 5px; padding: 0 28px 2px; }

/* ribbon */
.ribbon {
  display: grid;
  grid-template-columns: 262fr 283fr 195fr 314fr 166fr 273fr 84fr 94fr 94fr 76fr 53fr;
  gap: 1px;
  margin: 0 4px 0 5px;
}
.panel { display: flex; flex-direction: column; min-width: 0; background: #3b4453; }
.body { display: flex; height: 99px; padding: 3px 2px 0; }
.panel h2, .panel h2 span { display: flex; align-items: center; justify-content: center; gap: 8px; height: 23px; }
.panel h2 { padding-top: 1px; }
.panel h2 span { flex: 1; }
.launch { width: 8px; height: 20px; margin: 0 6px 0 -8px; }
.big { flex-direction: column; justify-content: flex-start; padding-top: 3px; }
.big svg { width: 40px; height: 40px; margin-bottom: 5px; }
.big .caret { margin-top: 4px; }
.w48 { width: 48px; }
.w52 { width: 52px; }
.w56 { width: 56px; }
.w60 { width: 60px; }
.full { width: 100%; }
.big.low { padding-top: 5px; }
.low svg { margin-bottom: 10px; }
.big.low .caret { margin-top: 2px; }
.rows { display: flex; flex-direction: column; align-items: flex-start; padding-left: 7px; }
.row { display: flex; align-items: center; gap: 10px; }
.tool { height: 31px; gap: 7px; }
.tool svg { width: 20px; height: 20px; }
.wide .row { gap: 15px; }

.modify .body { padding-left: 0; gap: 11px; }
.modify .wide { padding-left: 6px; }
.modify .wide .near { gap: 11px; }
.modify .rows:last-child { padding-left: 5px; }
.annot .body { padding-left: 7px; }
.annot .w52 { margin-left: 3px; }
.annot .rows { padding-left: 3px; }
.annot .wide .row { gap: 11px; }
.block .wide .row { gap: 12px; }
.block .rows { padding-left: 4px; }
.group .body { padding-left: 0; }
.group .rows { padding-left: 0; align-items: center; }
.util .body { padding-left: 5px; }
.util .rows { padding-left: 8px; }
.clip .body { padding-left: 1px; }
.clip .rows { padding-left: 4px; }

.layer .fill { flex: 1; min-width: 0; padding: 2px 2px 0 1px; }
.combo {
  display: flex; align-items: center; gap: 5px;
  height: 28px; padding: 0 1px 0 5px;
  background: #4f5b6e; border: 1px solid #262d39;
}
select {
  flex: 1; min-width: 0; padding: 0; border: 0;
  appearance: none; background: transparent;
}
.s20 { width: 19px; height: 20px; }
.swatch { width: 18px; height: 18px; background: #fff; }
.swatch.dark { border: 1px solid #111; margin: 0 1px; }
.strips { padding: 1px 0 0 3px; }
.strip { display: flex; gap: 10px; }

.props .body { padding-right: 3px; }
.props .narrow { padding-left: 3px; }
.combos { flex: 1; display: grid; gap: 2px; align-content: start; padding: 3px 0 0 3px; }
.c1 { padding-left: 14px; gap: 12px; }
.c1 .swatch { width: 20px; height: 20px; border: 1px solid #c9c9c9; }
.c2 { gap: 2px; padding-left: 4px; }
.rule { width: 80px; height: 1px; background: #fff; }
.wheel {
  width: 20px; height: 20px; border-radius: 50%;
  background: conic-gradient(from -30deg, #ffc63f 0 60deg, #ff9340 0 120deg, #f0525a 0 180deg, #8450f5 0 240deg, #10b2c9 0 300deg, #4fc97d 0);
}
.sel { width: 29px; height: 27px; margin-top: 2px; background: #4a6587; border: 1px solid #6cbcf7; }

/* drawing tabs */
.files { display: flex; height: 33px; padding-top: 5px; margin: 0 3px; }
.file { position: relative; width: 178px; height: 28px; margin-left: 18px; justify-content: flex-start; padding: 2px 0 0 22px; font-size: 16px; }
.file svg, .layouts svg { position: absolute; left: 0; top: 0; }
.file span, .layouts span { position: relative; }
.fclose { position: relative; width: 20px; margin-left: -47px; }
.fplus { margin-left: 21px; }

/* canvas */
.canvas {
  position: relative; flex: 1; min-height: 500px;
  margin: 0 3px; background: #000; border-top: 5px solid #3b4453; border-bottom: 1px solid #3b4453;
}
.vp { display: flex; gap: 2px; padding: 5px 3px; }
.vpwin { position: absolute; top: 10px; right: 12px; display: flex; gap: 11px; }
.cross { position: absolute; left: 951px; top: 190px; }
.ucs { position: absolute; left: 15px; bottom: 12px; }
.cmd {
  position: absolute; left: 369px; right: 369px; bottom: 0;
  display: flex; align-items: center; height: 34px;
  padding: 1px 0 1px 4px; background: #222933; border-radius: 3px 0 0 0;
}
.grip { margin-right: 6px; }
.wrench { margin: 0 6px 0 14px; }
.field { flex: 1; display: flex; align-self: stretch; padding: 0 6px 0 5px; background: #b1b1b1; border-radius: 2px; }
.field input {
  flex: 1; min-width: 0; padding: 0 0 0 14px; border: 0;
  background: transparent; color: #333; font-size: 16px; font-style: italic;
}
.field input::placeholder { color: #565656; opacity: 1; }

/* bottom bar */
.bottom { display: flex; justify-content: space-between; height: 39px; padding: 0 5px 0 13px; }
.layouts { display: flex; gap: 4px; }
.layouts button { position: relative; width: 66px; height: 22px; padding: 2px 0 0 2px; color: #c3c6cb; }
.layouts .model { color: #fff; font-weight: 700; width: 60px; padding-left: 8px; }
.layouts .add { width: 28px; margin-left: 2px; }
.status { display: flex; gap: 1px; padding-top: 2px; }
.sg { display: flex; height: 30px; background: #3b4453; }
.sg button { width: 30px; height: 30px; }
.sg svg { width: 20px; height: 20px; }
.sg .on { background: #618fc1; border: 1px solid #3b4453; }
.sg .dd { width: 20px; }
.first { margin-left: 2px; }
.units { display: flex; align-items: center; width: 121px; padding: 0 5px; gap: 11px; }
.units .caret { margin-left: -11px; }
.sliver { width: 3px; margin: 0 5px 0 1px; }
```
